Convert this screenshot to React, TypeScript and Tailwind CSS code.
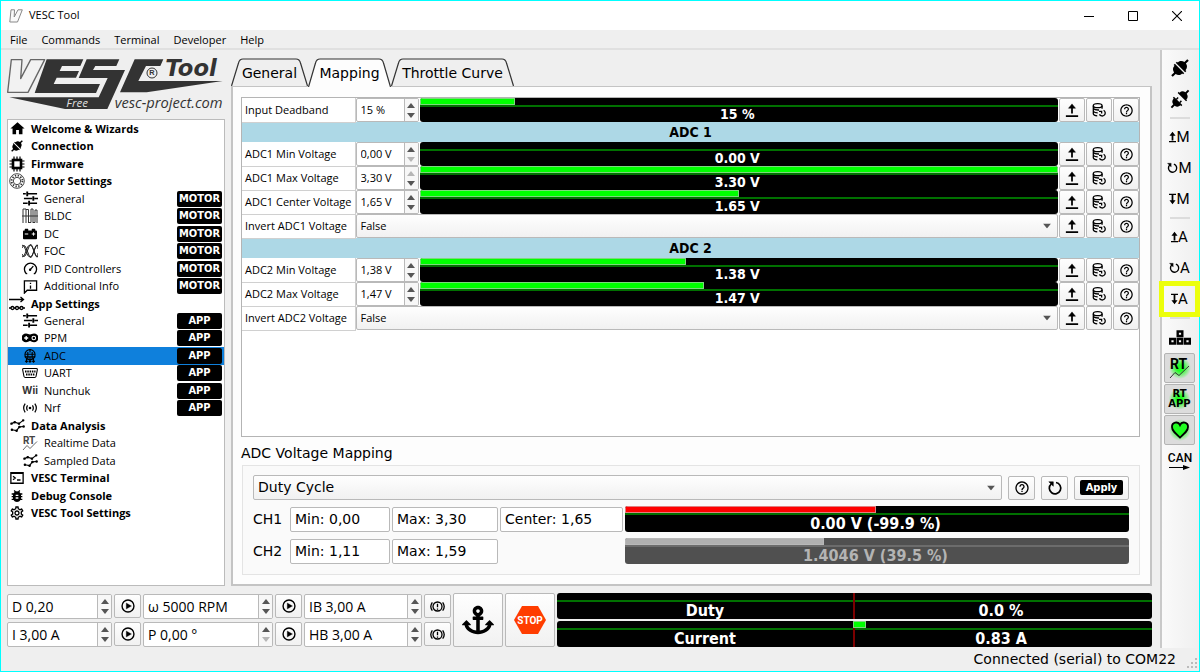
import React from "react";
import { FaAnchor, FaCarBattery } from "react-icons/fa";
import { MdBugReport, MdHelpOutline, MdHome, MdOutlineSettings } from "react-icons/md";

const UI = "font-['Open_Sans','Noto_Sans',sans-serif]";
const WIDE = "font-['DejaVu_Sans',sans-serif]";
const TIGHT = "font-['DejaVu_Sans_Condensed','DejaVu_Sans',sans-serif]";
const EDGE = "border border-[#b9b9b9] rounded-[2px]";
const FACE = "bg-linear-to-b from-[#fefefe] to-[#f1f1f1]";

type IconProps = { className?: string };

function Line({ className = "size-[15px]", children, w = 1.6 }: IconProps & { children: React.ReactNode; w?: number }) {
  return (
    <svg viewBox="0 0 16 16" className={className} fill="none" stroke="currentColor" strokeWidth={w} aria-hidden="true">
      {children}
    </svg>
  );
}

function PlugIcon({ className = "size-[16px]", apart = false }: IconProps & { apart?: boolean }) {
  const d = apart ? 2.6 : 0;
  return (
    <svg viewBox="0 0 20 20" className={`overflow-visible ${className}`} fill="currentColor" aria-hidden="true">
      <g transform="rotate(-45 10 10)">
        <g transform={`translate(${-d} 0)`}>
          <path d="M9.300 2.600V17.400H7.400V16C4.200 16 2.400 14 1.900 11.200H-2.600V8.800H1.900C2.400 6 4.200 4 7.400 4V2.600Z" />
          {apart && <path d="M9 6.200H12.200V8H9ZM9 12H12.200V13.800H9Z" />}
        </g>
        <g transform={`translate(${d} 0)`}>
          <path d="M10.700 2.600V17.400H12.600V16C15.800 16 17.600 14 18.100 11.200H22.600V8.800H18.100C17.600 6 15.800 4 12.600 4V2.600Z" />
        </g>
      </g>
    </svg>
  );
}

const ChipIcon = () => (
  <Line w={1.2} className="size-[16px]">
    <rect x="4" y="4" width="8" height="8" strokeWidth="2.6" />
    <path d="M5 .5V4M8 .5V4M11 .5V4M5 12v3.500M8 12v3.500M11 12v3.500M.5 5H4M.5 8H4M.5 11H4M12 5h3.500M12 8h3.500M12 11h3.500" />
  </Line>
);
const StatorIcon = () => (
  <Line w={0.9} className="size-[16px] text-[#333]">
    <circle cx="8" cy="8" r="7.300" />
    <circle cx="8" cy="8" r="3.700" />
    <circle cx="8" cy="8" r="5.400" strokeWidth="1.800" strokeDasharray="1.300 1.530" />
  </Line>
);
const SlidersIcon = () => (
  <Line w={1.5}>
    <path d="M0 3H3M5 3H15M1 8H10M12 8H16M0 13H5M7.500 13H15" />
    <path d="M4.500 .5V5.500M11 5.500V10.500M6.500 10.500V15.500" strokeWidth="2" />
  </Line>
);
const PulseIcon = () => (
  <Line w={1} className="size-[16px] text-[#333]">
    <path d="M1 15V1H4V15M4 1.500H6.500V15M6.500 14.500H9V1H11V15M11 14.500H13V2H15V15M0 8H16" />
  </Line>
);
const SineIcon = () => (
  <Line w={1} className="size-[16px] text-[#222]">
    <path d="M0 2Q2.500 2 4 8T8 14 12 8 16 2M0 14Q2.500 14 4 8T8 2 12 8 16 14M0 5Q1.500 1 3 3T6.500 11 10 13 13.500 4 16 6M0 11Q1.500 15 3 13T6.500 5 10 3 13.500 12 16 10" />
  </Line>
);
const GaugeIcon = () => (
  <Line w={1.4}>
    <path d="M3.500 13.500A6.500 6.500 0 1 1 12.500 13.500H11.500M3.500 13.500H4.500M7.500 9.500 11 5.500" />
    <circle cx="7.600" cy="9.300" r=".6" fill="currentColor" />
  </Line>
);
const InfoIcon = () => (
  <Line w={1.4}>
    <path d="M1.500 15V2H14.500V12H4.500ZM8 6.800V10.300M8 4V5.400" />
  </Line>
);
const AppIcon = () => (
  <Line w={1.3} className="size-[16px]">
    <path d="M0 3.500H14M11.500 1 14.500 3.500 11.500 6M0 12H16" />
    <circle cx="3.500" cy="12" r="1.500" fill="white" />
    <circle cx="8" cy="12" r="1.500" fill="white" />
    <circle cx="12.500" cy="12" r="1.500" fill="white" />
  </Line>
);
const PadIcon = () => (
  <svg viewBox="0 0 16 16" className="size-[16px]" aria-hidden="true">
    <path d="M4 3.500C6 3.500 6.500 4.500 8 4.500S10 3.500 12 3.500A4.200 4.200 0 0 1 12 12.300C10 12.300 9.500 11 8 11S6 12.300 4 12.300A4.200 4.200 0 0 1 4 3.500Z" />
    <path d="M4.200 6V10M2.200 8H6.200" stroke="white" strokeWidth="1.300" />
    <circle cx="11.800" cy="8" r="1.800" fill="none" stroke="white" strokeWidth="1.100" />
  </svg>
);
const PotIcon = () => (
  <Line w={1.3} className="size-[14px]">
    <circle cx="8" cy="6.500" r="5.800" />
    <path d="M2.500 6H13.500M5.500 3.500V11M10.500 3.500V11M8 0V4M2 9H14M4 11V15M8 9V15M12 11V15M2.500 13.500 4 15 5.500 13.500M6.500 13.500 8 15 9.500 13.500M10.500 13.500 12 15 13.500 13.500" />
  </Line>
);
const SerialIcon = () => (
  <Line w={1.1} className="size-[16px]">
    <path d="M1.500 3.500H14.500Q15.500 3.500 15.300 5L14 11.500Q13.800 12.500 12.500 12.500H3.500Q2.200 12.500 2 11.500L.7 5Q.5 3.500 1.500 3.500Z" />
    <path d="M3 6.500H13.500M4 9.500H12.500" strokeWidth="1.800" strokeDasharray="1.500 .8" />
  </Line>
);
const RadioIcon = () => (
  <Line w={1.4} className="size-[14px]">
    <circle cx="8" cy="8" r=".8" fill="currentColor" />
    <path d="M5.200 5Q3.200 8 5.200 11M10.800 5Q12.800 8 10.800 11M2.500 3Q-1 8 2.500 13M13.500 3Q17 8 13.500 13" />
  </Line>
);
const SampleIcon = () => (
  <Line w={1.2}>
    <path d="M1.500 6 5 4.500 9.500 6 14 2.500M2 12.500 7 13.500 10 9.500 14.500 9" />
    <path d="M1.500 6h.1M5 4.500h.1M9.500 6h.1M14 2.500h.1M2 12.500h.1M7 13.500h.1M10 9.500h.1M14.500 9h.1" strokeWidth="2.600" strokeLinecap="round" />
  </Line>
);
const ConsoleIcon = () => (
  <Line w={1.5} className="size-[14px]">
    <path d="M1 2H15V14H1ZM1 2.800H15M3.500 6 6 8 3.500 10M8 10.300H12" />
  </Line>
);
const RtIcon = () => (
  <svg viewBox="0 0 16 16" className="size-[16px] text-[#444]" aria-hidden="true">
    <text x="1" y="9" fontSize="10" fontFamily="Liberation Sans Narrow, Roboto" fontWeight="700" fill="currentColor">RT</text>
    <path d="M1 15 5 10.500 8 13.500 15 6.500" fill="none" stroke="currentColor" strokeWidth=".8" />
  </svg>
);
const WiiIcon = () => <span className="font-['Inter',sans-serif] text-[10px] font-bold text-[#333]">Wii</span>;

type Node = { name: string; icon: React.ReactNode; tag?: string; top?: boolean; active?: boolean };
const tree: Node[] = [
  { name: "Welcome & Wizards", icon: <MdHome className="size-[17px]" />, top: true },
  { name: "Connection", icon: <PlugIcon className="size-[12px]" />, top: true },
  { name: "Firmware", icon: <ChipIcon />, top: true },
  { name: "Motor Settings", icon: <StatorIcon />, top: true },
  { name: "General", icon: <SlidersIcon />, tag: "MOTOR" },
  { name: "BLDC", icon: <PulseIcon />, tag: "MOTOR" },
  { name: "DC", icon: <FaCarBattery className="size-[14px]" />, tag: "MOTOR" },
  { name: "FOC", icon: <SineIcon />, tag: "MOTOR" },
  { name: "PID Controllers", icon: <GaugeIcon />, tag: "MOTOR" },
  { name: "Additional Info", icon: <InfoIcon />, tag: "MOTOR" },
  { name: "App Settings", icon: <AppIcon />, top: true },
  { name: "General", icon: <SlidersIcon />, tag: "APP" },
  { name: "PPM", icon: <PadIcon />, tag: "APP" },
  { name: "ADC", icon: <PotIcon />, tag: "APP", active: true },
  { name: "UART", icon: <SerialIcon />, tag: "APP" },
  { name: "Nunchuk", icon: <WiiIcon />, tag: "APP" },
  { name: "Nrf", icon: <RadioIcon />, tag: "APP" },
  { name: "Data Analysis", icon: <SampleIcon />, top: true },
  { name: "Realtime Data", icon: <RtIcon /> },
  { name: "Sampled Data", icon: <SampleIcon /> },
  { name: "VESC Terminal", icon: <ConsoleIcon />, top: true },
  { name: "Debug Console", icon: <MdBugReport className="size-[16px]" />, top: true },
  { name: "VESC Tool Settings", icon: <MdOutlineSettings className="size-[16px]" />, top: true },
];

function Logo() {
  return (
    <svg viewBox="21 168 654 180" className="mt-[6px] h-[60px] w-full shrink-0 overflow-visible" role="img" aria-label="VESC Tool Free">
      <path d="M34 179H66L62 236 92 179H134L84 277H23Z" fill="#f2f2f2" stroke="#666" strokeWidth="4" strokeLinejoin="round" />
      <g fill="#333">
        <path d="M140 178H250L241 198H186L179 213H237L228 233H170L161 252H300L288 279H104Z" />
        <path d="M260 178H358L349 198H286L279 210H375L322 327H195L28 292H296L323 234H236Z" />
        <path d="M404 178H490L481 198H438L415 243H668L440 277H360Z" />
        <text x="496" y="228" fontFamily="DejaVu Sans" fontWeight="bold" fontStyle="italic" fontSize="68">Tool</text>
        <text x="344" y="324" fontFamily="Open Sans" fontStyle="italic" fontSize="44">vesc-project.com</text>
        <text x="448" y="226" fontFamily="Liberation Sans" fontWeight="bold" fontSize="22">R</text>
      </g>
      <circle cx="456" cy="219" r="15" fill="none" stroke="#333" strokeWidth="3" />
      <text x="199" y="322" fontFamily="Open Sans" fontStyle="italic" fontSize="35" fill="#ddd">Free</text>
    </svg>
  );
}

function Sidebar() {
  return (
    <aside className="flex w-[218px] shrink-0 flex-col">
      <Logo />
      <nav aria-label="Pages" className="mt-[3px] flex-1 border border-[#bbb] bg-white">
        <ul className={`grid h-[402px] auto-rows-fr text-[11px] ${UI}`}>
          {tree.map((n, i) => (
            <li key={i} className={`flex items-center pr-[2px] ${n.active ? "bg-[#0f80dc]" : ""}`}>
              <a href="#page" className={`flex min-w-0 flex-1 items-center ${n.top ? "font-bold" : "pl-[13px]"}`}>
                <span className="flex w-[18px] justify-center">{n.icon}</span>
                <span className="ml-[5px] leading-[16px]">{n.name}</span>
              </a>
              {n.tag && (
                <span className={`w-[45px] rounded-[2px] bg-black text-center text-[11px] leading-[16px] font-bold text-white ${TIGHT}`}>{n.tag}</span>
              )}
            </li>
          ))}
        </ul>
      </nav>
    </aside>
  );
}

type BarProps = {
  texts: string[];
  fill: number;
  from?: number;
  tone?: "green" | "red" | "grey";
  tall?: boolean;
  marker?: boolean;
};
const toneFill = {
  green: "bg-[#00ff00] border-[#7dd87d]",
  red: "bg-[#ff0000] border-[#e08080]",
  grey: "bg-[#b0b0b0] border-[#b8b8b8]",
};
function Bar({ texts, fill, from = 0, tone = "green", tall, marker }: BarProps) {
  const grey = tone === "grey";
  return (
    <div className={`relative flex w-full flex-col overflow-hidden rounded-[3px] font-bold ${TIGHT} ${tall ? "h-[26px] text-[16px]" : "h-[24px] text-[14px]"} ${grey ? "bg-[#505050] text-[#b4b4b4]" : "bg-black text-white"}`}>
      {marker && <span className="absolute inset-y-0 right-1/2 w-[2px] bg-[#7c0000]" />}
      <div className="h-[7px] shrink-0">
        {fill > 0 && <div className={`relative h-full border ${toneFill[tone]}`} style={{ width: `${fill}%`, marginLeft: `${from}%` }} />}
      </div>
      <div className={`h-[2px] shrink-0 ${grey ? "bg-[#6c6c6c]" : "bg-[#007000]"}`} />
      <div className="relative flex flex-1 items-center pr-[3px] leading-[15px]">
        {texts.map((t) => <span key={t} className="flex-1 text-center">{t}</span>)}
      </div>
    </div>
  );
}

function Spin({ label, value, size = "text-[11px] pl-[4px]", upOff, downOff, className }: { label: string; value: string; size?: string; upOff?: boolean; downOff?: boolean; className: string }) {
  return (
    <div className={`flex overflow-hidden bg-white ${EDGE} ${className}`}>
      <input aria-label={label} defaultValue={value} className={`min-w-0 flex-1 outline-none ${UI} ${size}`} />
      <div className="flex w-[14px] shrink-0 flex-col border-l border-[#b9b9b9] bg-[#f7f7f7] py-px">
        <button aria-label={`Increase ${label}`} disabled={upOff} className="flex flex-1 items-center justify-center text-[#555] disabled:text-[#b5b5b5]">
          <svg viewBox="0 0 8 5" className="h-[5px] w-[8px]" fill="currentColor"><path d="M0 5 4 0 8 5Z" /></svg>
        </button>
        <button aria-label={`Decrease ${label}`} disabled={downOff} className="flex flex-1 items-center justify-center text-[#555] disabled:text-[#b5b5b5]">
          <svg viewBox="0 0 8 5" className="h-[5px] w-[8px]" fill="currentColor"><path d="M0 0 4 5 8 0Z" /></svg>
        </button>
      </div>
    </div>
  );
}

function Combo({ label, value, options, className }: { label: string; value: string; options: string[]; className: string }) {
  return (
    <div className={`relative flex-1 ${FACE} ${EDGE} ${className}`}>
      <select aria-label={label} defaultValue={value} className="h-full w-full appearance-none bg-transparent px-[4px] outline-none">
        {options.map((o) => <option key={o}>{o}</option>)}
      </select>
      <svg viewBox="0 0 8 5" className="pointer-events-none absolute top-1/2 right-[6px] h-[5px] w-[8px] -translate-y-1/2" fill="#555"><path d="M0 0 4 5 8 0Z" /></svg>
    </div>
  );
}

const actionBtn = `flex h-[24px] w-[26px] items-center justify-center ${FACE} ${EDGE}`;

function Actions({ name }: { name: string }) {
  return (
    <div className="flex gap-px">
      <button aria-label={`Read ${name}`} className={actionBtn}>
        <Line w={2} className="size-[14px]"><path d="M8 12V3.500M1 15H15" /><path d="M4 6 8 1 12 6Z" fill="currentColor" strokeWidth=".5" /></Line>
      </button>
      <button aria-label={`Default ${name}`} className={actionBtn}>
        <Line w={1.5} className="size-[14px]">
          <ellipse cx="6.500" cy="3" rx="5" ry="2.200" />
          <path d="M1.500 3V12.500Q2 14.500 6 14.700M11.500 3V6.500M1.500 6.300Q3 8.200 8 8M1.500 9.500Q3 11.300 6.500 11.300M13.300 8.300A3.500 3.500 0 1 1 8.500 13M8 9.500H11V12" />
        </Line>
      </button>
      <button aria-label={`Help ${name}`} className={actionBtn}><MdHelpOutline className="size-[15px]" /></button>
    </div>
  );
}

type Param = { label: string; value: string; bar?: string; fill?: number; upOff?: boolean; downOff?: boolean };
const groups: { title?: string; rows: Param[] }[] = [
  { rows: [{ label: "Input Deadband", value: "15 %", bar: "15 %", fill: 15 }] },
  {
    title: "ADC 1",
    rows: [
      { label: "ADC1 Min Voltage", value: "0,00 V", bar: "0.00 V", fill: 0, downOff: true },
      { label: "ADC1 Max Voltage", value: "3,30 V", bar: "3.30 V", fill: 100, upOff: true },
      { label: "ADC1 Center Voltage", value: "1,65 V", bar: "1.65 V", fill: 50 },
      { label: "Invert ADC1 Voltage", value: "False" },
    ],
  },
  {
    title: "ADC 2",
    rows: [
      { label: "ADC2 Min Voltage", value: "1,38 V", bar: "1.38 V", fill: 41.8 },
      { label: "ADC2 Max Voltage", value: "1,47 V", bar: "1.47 V", fill: 44.5 },
      { label: "Invert ADC2 Voltage", value: "False" },
    ],
  },
];

function ParamTable() {
  return (
    <div className="flex-1 border border-[#b4b4b4] bg-white">
      <table className={`w-full table-fixed border-collapse text-[11px] ${UI}`}>
        <colgroup>
          <col className="w-[113px]" />
          <col />
        </colgroup>
        {groups.map((g, gi) => (
          <tbody key={gi}>
            {g.title && (
              <tr>
                <th colSpan={2} className={`h-[20px] bg-[#add8e6] p-0 text-center text-[14px] leading-[18px] ${TIGHT}`}>{g.title}</th>
              </tr>
            )}
            {g.rows.map((r) => (
              <tr key={r.label}>
                <th scope="row" className="h-[24px] border-r border-b border-[#d0d0d0] p-0 pl-[3px] text-left leading-[16px] font-normal whitespace-nowrap">{r.label}</th>
                <td className="h-[24px] p-0">
                  <div className="flex gap-px">
                    {r.bar ? (
                      <>
                        <Spin label={r.label} value={r.value} upOff={r.upOff} downOff={r.downOff} className="h-[24px] w-[63px] shrink-0" />
                        <div className="min-w-0 flex-1"><Bar texts={[r.bar]} fill={r.fill ?? 0} /></div>
                      </>
                    ) : (
                      <Combo label={r.label} value={r.value} options={["False", "True"]} className="h-[24px]" />
                    )}
                    <Actions name={r.label} />
                  </div>
                </td>
              </tr>
            ))}
          </tbody>
        ))}
      </table>
    </div>
  );
}

function Tab({ label, w, active }: { label: string; w: number; active?: boolean }) {
  const top = active ? 1 : 2;
  return (
    <button role="tab" aria-selected={!!active} className={`relative flex h-[29px] items-center justify-center pt-[3px] ${active ? "z-10 -mb-px pb-px" : ""}`} style={{ width: w }}>
      <svg viewBox={`0 0 ${w} 29`} className="absolute inset-0 h-full w-full" fill={active ? "#fdfdfd" : "none"} stroke="#333" strokeWidth="1.2" aria-hidden="true">
        <path d={`M0.500 29 L7.500 ${top + 4} Q8.500 ${top} 12 ${top} H${w - 12} Q${w - 8.5} ${top} ${w - 7.5} ${top + 4} L${w - 0.5} 29`} />
      </svg>
      <span className="relative">{label}</span>
    </button>
  );
}

const field = `h-[25px] bg-white px-[4px] outline-none ${EDGE}`;
const groupBtn = `flex h-[24px] items-center justify-center ${FACE} ${EDGE}`;

const ReloadIcon = () => (
  <Line w={1.7} className="size-[16px]"><path d="M9 2.500A5.700 5.700 0 1 1 4.300 3.800" /><path d="M1.800 1.800H6.300V6.300Z" fill="currentColor" strokeWidth=".5" /></Line>
);

function MappingPanel() {
  return (
    <section className={`flex min-w-0 flex-1 flex-col pt-[7px] text-[14px] ${WIDE}`}>
      <div role="tablist" className="flex items-end">
        <Tab label="General" w={77} />
        <Tab label="Mapping" w={83} active />
        <Tab label="Throttle Curve" w={123} />
      </div>
      <div className="flex flex-1 flex-col border-2 border-t border-[#c4c4c4] bg-[#fdfdfd] pt-[10px] pr-[10px] pb-[9px] pl-[8px]">
        <ParamTable />
        <h2 className="mt-[6px] leading-[20px]">ADC Voltage Mapping</h2>
        <div className="mt-[2px] ml-px flex flex-col gap-[6px] border border-[#e4e4e4] bg-[#fafafa] pt-[9px] pr-[10px] pb-[10px] pl-[10px]">
          <div className="flex items-center gap-[6px]">
            <Combo label="Control type" value="Duty Cycle" options={["Duty Cycle", "Current", "Off"]} className="h-[25px]" />
            <button aria-label="Help" className={`w-[27px] ${groupBtn}`}><MdHelpOutline className="size-[16px]" /></button>
            <button aria-label="Reset" className={`w-[27px] ${groupBtn}`}><ReloadIcon /></button>
            <button className={`w-[55px] ${groupBtn}`}>
              <span className={`rounded-[2px] bg-black px-[6px] text-[11px] leading-[15px] font-bold text-white ${TIGHT}`}>Apply</span>
            </button>
          </div>
          <div className="flex items-center gap-[2px]">
            <span className="w-[35px]">CH1</span>
            <input aria-label="CH1 minimum" defaultValue="Min: 0,00" className={`w-[100px] ${field}`} />
            <input aria-label="CH1 maximum" defaultValue="Max: 3,30" className={`w-[106px] ${field}`} />
            <input aria-label="CH1 center" defaultValue="Center: 1,65" className={`w-[123px] ${field}`} />
            <div className="min-w-0 flex-1"><Bar texts={["0.00 V (-99.9 %)"]} fill={49.8} tone="red" tall /></div>
          </div>
          <div className="flex items-center gap-[2px]">
            <span className="w-[35px]">CH2</span>
            <input aria-label="CH2 minimum" defaultValue="Min: 1,11" className={`w-[100px] ${field}`} />
            <input aria-label="CH2 maximum" defaultValue="Max: 1,59" className={`mr-[125px] w-[106px] ${field}`} />
            <div className="min-w-0 flex-1"><Bar texts={["1.4046 V (39.5 %)"]} fill={39.5} tone="grey" tall /></div>
          </div>
        </div>
      </div>
    </section>
  );
}

const PlayIcon = () => (
  <Line w={1.6} className="size-[14px]"><circle cx="8" cy="8" r="6.800" /><path d="M6 4.500 12 8 6 11.500Z" fill="currentColor" strokeWidth=".3" /></Line>
);
const BrakeIcon = () => (
  <Line w={1.4} className="size-[15px]"><circle cx="8" cy="8" r="4.800" /><path d="M8 5V8.800M8 10V11.500M2.500 3.500Q-.8 8 2.500 12.500M13.500 3.500Q16.800 8 13.500 12.500" /></Line>
);

function Pair({ top, bottom, w, icon, action, bottomOff }: { top: string; bottom: string; w: string; icon: React.ReactNode; action: string; bottomOff?: boolean }) {
  return (
    <div className="flex flex-col gap-[3px] pt-px">
      {[top, bottom].map((v, i) => (
        <div key={v} className="flex gap-[2px]">
          <Spin label={v} value={v} size="text-[14px] pl-[4px]" downOff={i === 1 && bottomOff} className={`h-[25px] ${w}`} />
          <button aria-label={`${action} ${v}`} className={`flex h-[24px] w-[27px] items-center justify-center ${FACE} ${EDGE}`}>{icon}</button>
        </div>
      ))}
    </div>
  );
}

function ControlStrip() {
  return (
    <footer className="mt-[7px] flex gap-[2px]">
      <Pair top="D 0,20" bottom="I 3,00 A" w="w-[105px]" icon={<PlayIcon />} action="Run" />
      <Pair top="ω 5000 RPM" bottom="P 0,00 °" w="w-[130px]" icon={<PlayIcon />} action="Run" bottomOff />
      <Pair top="IB 3,00 A" bottom="HB 3,00 A" w="w-[118px]" icon={<BrakeIcon />} action="Brake" />
      <button aria-label="Release motor" className={`flex h-[54px] w-[50px] items-center justify-center ${FACE} ${EDGE}`}><FaAnchor className="size-[32px]" /></button>
      <button className={`flex h-[54px] w-[50px] items-center justify-center ${FACE} ${EDGE}`}>
        <svg viewBox="0 0 32 28" className="h-[28px] w-[32px]" role="img" aria-label="Stop">
          <path d="M8 0H24L32 14 24 28H8L0 14Z" fill="#ff3d00" />
          <text x="16" y="18" textAnchor="middle" fontFamily="Roboto" fontWeight="bold" fontSize="10" fill="white">STOP</text>
        </svg>
      </button>
      <div className="flex min-w-0 flex-1 flex-col gap-[2px]">
        <Bar fill={0} marker tall texts={["Duty", "0.0 %"]} />
        <Bar fill={2.2} from={49.8} marker tall texts={["Current", "0.83 A"]} />
      </div>
    </footer>
  );
}

const UpMark = () => (
  <svg viewBox="0 0 8 12" className="h-[12px] w-[7px]" fill="currentColor"><path d="M4 0 7.500 4.500H5V10H3V4.500H.5ZM0 10.500H8V12H0Z" /></svg>
);
const DownMark = () => (
  <svg viewBox="0 0 8 12" className="h-[12px] w-[7px]" fill="currentColor"><path d="M4 12 7.500 7.500H5V1.500H3V7.500H.5ZM0 0H8V1.500H0Z" /></svg>
);
const TurnMark = () => (
  <svg viewBox="0 0 12 12" className="h-[12px] w-[11px]" fill="none" stroke="currentColor" strokeWidth="1.500"><path d="M7.500 1.800A4.500 4.500 0 1 1 3 2.800" /><path d="M.5 .8H4.600V5Z" fill="currentColor" strokeWidth=".3" /></svg>
);

function Tool({ label, children, on, marked }: { label: string; children: React.ReactNode; on?: boolean; marked?: boolean }) {
  return (
    <button aria-label={label} className={`relative flex h-[30px] w-[31px] items-center justify-center font-['Roboto',sans-serif] text-[15px] leading-none ${on ? "rounded-[2px] border border-[#b4b4b4] bg-[#dcdcdc]" : ""}`}>
      {children}
      {marked && <span className="absolute -inset-x-[5px] -inset-y-[3px] border-[5px] border-[#ecff0c]" />}
    </button>
  );
}
const Rule = () => <hr className="my-[2px] w-[20px] border-t-2 border-[#dcdcdc]" />;

const glow = "bg-[radial-gradient(circle,#1fff1f_20%,transparent_70%)]";

function ToolRail() {
  return (
    <div role="toolbar" className="flex w-[39px] shrink-0 flex-col items-center gap-px border-l-2 border-[#c9c9c9] bg-linear-to-r from-[#fafafa] to-[#efefef] pt-[3px] pr-[2px]">
      <Tool label="Connect"><PlugIcon className="size-[18px]" /></Tool>
      <Tool label="Disconnect"><PlugIcon apart className="size-[16px]" /></Tool>
      <Rule />
      <Tool label="Read motor configuration"><UpMark />M</Tool>
      <Tool label="Default motor configuration"><TurnMark />M</Tool>
      <Tool label="Write motor configuration"><DownMark />M</Tool>
      <Rule />
      <Tool label="Read app configuration"><UpMark />A</Tool>
      <Tool label="Default app configuration"><TurnMark />A</Tool>
      <Tool label="Write app configuration" marked><DownMark />A</Tool>
      <Rule />
      <Tool label="Keyboard control">
        <svg viewBox="0 0 22 15" className="h-[15px] w-[22px]" fill="none" stroke="currentColor" strokeWidth="2.400">
          <path d="M8.700 1.500H13.300V6H8.700ZM1.200 9H5.800V13.500H1.200ZM8.700 9H13.300V13.500H8.700ZM16.200 9H20.800V13.500H16.200Z" />
        </svg>
      </Tool>
      <Tool label="Stream realtime data" on>
        <svg viewBox="0 0 22 22" className={`size-[22px] shrink-0 ${glow}`}>
          <text x="1" y="12" fontFamily="Liberation Sans Narrow, Roboto" fontWeight="700" fontSize="14">RT</text>
          <path d="M1 21 6 15.500 10 18.500 20 9" fill="none" stroke="#333" strokeWidth="1" />
        </svg>
      </Tool>
      <Tool label="Stream app data" on>
        <span className={`flex flex-col text-center text-[10px] leading-[10px] font-bold ${WIDE} ${glow}`}><span>RT</span><span>APP</span></span>
      </Tool>
      <Tool label="Keep alive" on>
        <svg viewBox="0 0 22 22" className={`size-[22px] shrink-0 ${glow}`}>
          <path d="M11 18.500C6 14 3 11.500 3 8A4.200 4.200 0 0 1 11 6A4.200 4.200 0 0 1 19 8C19 11.500 16 14 11 18.500Z" fill="#1fff1f" stroke="black" strokeWidth="1.800" />
        </svg>
      </Tool>
      <Tool label="CAN forwarding">
        <svg viewBox="0 0 22 22" className="size-[22px] shrink-0 overflow-visible">
          <text x="11" y="12" textAnchor="middle" fontFamily="Roboto" fontWeight="500" fontSize="12">CAN</text>
          <path d="M0 17.500H16" stroke="black" />
          <path d="M14 15 21 17.500 14 20Z" />
        </svg>
      </Tool>
    </div>
  );
}

export default function App() {
  return (
    <div className="flex min-h-screen flex-col border border-[#00ffff] bg-[#efefef] text-black">
      <header className={`flex h-[29px] items-center bg-white pl-[8px] text-[11px] ${UI}`}>
        <svg viewBox="0 0 14 14" className="size-[14px]" fill="#fafafa" stroke="#888" strokeWidth="1" aria-hidden="true"><path d="M2 .8H5.500L5.200 8 9 .8H13.300L8.500 13H.8Z" /></svg>
        <h1 className="ml-[6px] flex-1">VESC Tool</h1>
        <button aria-label="Minimize" className="flex h-full w-[44px] items-center justify-center"><svg viewBox="0 0 10 10" className="size-[10px]"><path d="M0 5.500H10" stroke="black" /></svg></button>
        <button aria-label="Maximize" className="flex h-full w-[44px] items-center justify-center"><svg viewBox="0 0 10 10" className="size-[10px]"><path d="M.5 .5H9.500V9.500H.5Z" fill="none" stroke="black" /></svg></button>
        <button aria-label="Close" className="flex h-full w-[44px] items-center justify-center"><svg viewBox="0 0 10 10" className="size-[10px]"><path d="M0 0 10 10M10 0 0 10" stroke="black" strokeWidth="1.100" /></svg></button>
      </header>
      <nav aria-label="Menu" className={`flex h-[20px] items-center gap-[14px] border-b-2 border-[#e0e0e0] pt-px pl-[9px] text-[11px] leading-[16px] ${UI}`}>
        {["File", "Commands", "Terminal", "Developer", "Help"].map((m) => <button key={m}>{m}</button>)}
      </nav>
      <div className="flex flex-1">
        <main className="flex min-w-0 flex-1 flex-col pr-[8px] pl-[6px]">
          <div className="flex flex-1 gap-[6px]">
            <Sidebar />
            <MappingPanel />
          </div>
          <ControlStrip />
          <div className="h-px" />
        </main>
        <ToolRail />
      </div>
      <div role="status" className={`relative h-[23px] pr-[23px] text-right text-[14px] leading-[23px] ${WIDE}`}>
        Connected (serial) to COM22
        <svg viewBox="0 0 12 12" className="absolute right-px bottom-px size-[12px]" fill="#bbb" aria-hidden="true"><path d="M9 0h2v2H9ZM5 4h2v2H5ZM9 4h2v2H9ZM1 8h2v2H1ZM5 8h2v2H5ZM9 8h2v2H9Z" /></svg>
      </div>
    </div>
  );
}
